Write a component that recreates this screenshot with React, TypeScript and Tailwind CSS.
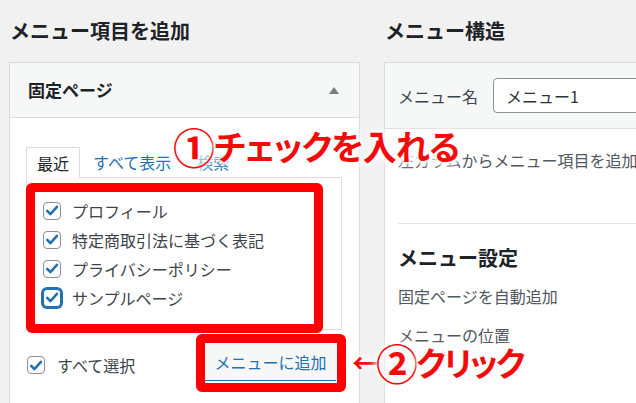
import React from 'react';

function Check({ focus = false }: { focus?: boolean }) {
  return (
    <span
      className={`flex h-[18px] w-[18px] shrink-0 items-center justify-center rounded-[4px] border bg-white ${
        focus ? 'border-[#2271b1] shadow-[0_0_0_2px_#2271b1]' : 'border-[#8c8f94]'
      }`}
    >
      <svg viewBox="0 0 20 20" className="h-[17px] w-[17px]">
        <path
          d="M4 10.4l4 4 8.2-9"
          fill="none"
          stroke="#2271b1"
          strokeWidth="3.2"
          strokeLinecap="round"
          strokeLinejoin="round"
        />
      </svg>
    </span>
  );
}

const pages = ['プロフィール', '特定商取引法に基づく表記', 'プライバシーポリシー', 'サンプルページ'];

const annotation =
  "flex items-center font-bold leading-none text-[#f50a0a] [font-feature-settings:'palt'] [text-shadow:0_0_2px_#fff,0_0_3px_#fff,0_0_5px_#fff,0_0_7px_#fff,0_0_9px_#fff,0_0_11px_#fff,0_0_13px_#fff]";

export default function App() {
  return (
    <div className="relative h-[403px] w-[636px] overflow-hidden bg-[#f1f1f1] font-['Noto_Sans_CJK_JP',sans-serif] text-[16px] text-[#3c434a]">
      <div className="flex gap-[24px] pl-[9px]">
        {/* left column */}
        <section className="w-[351px] shrink-0">
          <h2 className="pl-[1px] pt-[17px] text-[20px] font-bold leading-[28px] text-[#1d2327]">
            メニュー項目を追加
          </h2>
          <div className="mt-[17px] h-[400px] border border-[#dcdcde] bg-white">
            <div className="flex h-[55px] items-center justify-between border-b border-[#dcdcde] bg-[#f6f7f7] pl-[18px] pr-[20px]">
              <span className="text-[17px] font-bold text-[#1d2327]">固定ページ</span>
              <svg viewBox="0 0 10 7" className="h-[7px] w-[10px]">
                <polygon points="5,0 10,7 0,7" fill="#787c82" />
              </svg>
            </div>

            <div className="pl-[16px] pt-[29px]">
              <div className="flex items-end text-[16px] leading-[24px]">
                <span className="relative z-10 -mb-px flex h-[31px] items-center border border-b-0 border-[#dcdcde] bg-white px-[10px] text-[#1d2327]">
                  最近
                </span>
                <span className="flex h-[30px] items-center px-[13px] text-[#2271b1]">すべて表示</span>
                <span className="flex h-[30px] items-center px-[13px] text-[#2271b1]">検索</span>
              </div>

              <div className="relative h-[153px] w-[316px] border border-[#dcdcde] bg-white pl-[16px] pt-[18px]">
                <ul className="flex flex-col">
                  {pages.map((p, i) => (
                    <li key={p} className="flex h-[29px] items-center gap-[11px]">
                      <Check focus={i === pages.length - 1} />
                      <span>{p}</span>
                    </li>
                  ))}
                </ul>
                <div className="absolute left-[-1px] top-[5px] h-[150px] w-[297px] rounded-[6px] border-[9px] border-[#ff0000]" />
              </div>

              <div className="mt-[13px] flex w-[316px] items-center justify-between pl-[1px] pr-[6px]">
                <label className="mt-[6px] flex items-center gap-[12px]">
                  <Check />
                  <span>すべて選択</span>
                </label>
                <div className="relative">
                  <button className="flex h-[38px] w-[131px] items-center justify-center border-b border-[#2271b1] bg-[#f6f7f7] text-[16px] text-[#2271b1]">
                    メニューに追加
                  </button>
                  <div className="absolute -bottom-[11px] -left-[9px] -right-[10px] -top-[9px] rounded-[6px] border-[9px] border-[#ff0000]" />
                </div>
              </div>
            </div>
          </div>
        </section>

        {/* right column */}
        <section className="w-[300px] shrink-0">
          <h2 className="pl-[1px] pt-[17px] text-[20px] font-bold leading-[28px] text-[#1d2327]">
            メニュー構造
          </h2>
          <div className="mt-[17px] h-[400px] border border-[#dcdcde] bg-white">
            <div className="flex h-[66px] items-center border-b border-[#dcdcde] bg-[#f6f7f7] px-[13px]">
              <span className="shrink-0 whitespace-nowrap">メニュー名</span>
              <div className="ml-[15px] flex h-[35px] w-[200px] shrink-0 items-center rounded-[4px] border border-[#8c8f94] bg-white px-[12px] text-[#2c3338]">
                メニュー1
              </div>
            </div>
            <div className="px-[13px] pt-[19px]">
              <p className="leading-[24px] whitespace-nowrap text-[#50575e]">
                左カラムからメニュー項目を追加
              </p>
              <div className="mt-[51px] border-t border-[#e5e5e5]" />
              <h3 className="mt-[20px] text-[20px] font-bold leading-[28px] text-[#1d2327]">メニュー設定</h3>
              <p className="mt-[12px] leading-[24px] text-[#50575e]">固定ページを自動追加</p>
              <p className="mt-[15px] leading-[24px] text-[#50575e]">メニューの位置</p>
            </div>
          </div>
        </section>
      </div>

      {/* annotations */}
      <div className={`absolute left-[173px] top-[125px] text-[34px] tracking-[-1px] ${annotation}`}>
        <span className="text-[42px]">①</span>
        <span>チェックを入れる</span>
      </div>
      <div className={`absolute left-[352px] top-[341px] text-[33px] tracking-[-2px] ${annotation}`}>
        <span className="text-[26px]">←</span>
        <span className="text-[42px]">②</span>
        <span>クリック</span>
      </div>
    </div>
  );
}
